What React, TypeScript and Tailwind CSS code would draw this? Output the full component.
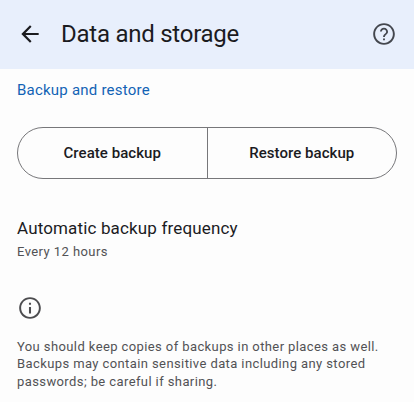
import React from "react";

function BackIcon() {
  return (
    <svg viewBox="0 0 24 24" className="size-[26px]" fill="currentColor">
      <path d="M20 11H7.83l5.59-5.59L12 4l-8 8 8 8 1.41-1.41L7.83 13H20v-2z" />
    </svg>
  );
}

function HelpIcon() {
  return (
    <svg viewBox="0 0 24 24" className="size-[26px]" fill="currentColor">
      <path d="M11.15 17.8h1.7v-1.7h-1.7v1.7zM12 2C6.48 2 2 6.48 2 12s4.48 10 10 10 10-4.48 10-10S17.52 2 12 2zm0 18.2c-4.5 0-8.2-3.7-8.2-8.2S7.5 3.8 12 3.8s8.2 3.7 8.2 8.2-3.7 8.2-8.2 8.2zM12 6.2c-1.95 0-3.55 1.5-3.7 3.4h1.7c.15-1 1-1.75 2-1.75 1.1 0 2 .9 2 2 0 1.9-2.85 1.9-2.85 5h1.7c0-2.3 2.85-2.6 2.85-5 0-2-1.7-3.65-3.7-3.65z" />
    </svg>
  );
}

function InfoIcon() {
  return (
    <svg viewBox="0 0 24 24" className="size-[26px]" fill="currentColor">
      <path d="M11.05 7.2h1.9V9h-1.9zm0 3.8h1.9v6h-1.9zM12 2C6.48 2 2 6.48 2 12s4.48 10 10 10 10-4.48 10-10S17.52 2 12 2zm0 18.2c-4.5 0-8.2-3.7-8.2-8.2S7.5 3.8 12 3.8s8.2 3.7 8.2 8.2-3.7 8.2-8.2 8.2z" />
    </svg>
  );
}

export default function App() {
  return (
    <div className="h-[402px] w-[414px] overflow-hidden bg-[#fdfdfd] font-['Roboto',sans-serif] text-[#1b1b1f]">
      <header className="flex h-[69px] items-center bg-[#e8effc] pr-[17px] pb-px pl-[17px]">
        <BackIcon />
        <h1 className="ml-[18px] flex-1 text-[24px] leading-8 tracking-[-0.25px] whitespace-nowrap">Data and storage</h1>
        <span className="text-[#44474e]"><HelpIcon /></span>
      </header>
      <main className="pr-[17px] pl-[17px]">
        <h2 className="pt-[11px] text-[15px] leading-5 tracking-[0.22px] text-[#1263b5]">Backup and restore</h2>
        <div className="mt-[27px] flex h-[52px] rounded-full border border-[#77777a] text-[15px] font-medium tracking-[0.05px]">
          <button className="flex-1 border-r border-[#77777a]">Create backup</button>
          <button className="flex-1">Restore backup</button>
        </div>
        <h3 className="mt-[37px] text-[17px] leading-6 tracking-[0.15px]">Automatic backup frequency</h3>
        <p className="mt-[2px] text-[13px] leading-5 tracking-[0.43px] text-[#525255]">Every 12 hours</p>
        <div className="mt-[33px] text-[#4c4c4f]"><InfoIcon /></div>
        <p className="mt-[17px] text-[13px] leading-[17.3px] tracking-[0.4px] whitespace-nowrap text-[#525255]">
          You should keep copies of backups in other places as well.<br />
          Backups may contain sensitive data including any stored<br />
          passwords; be careful if sharing.
        </p>
      </main>
    </div>
  );
}
